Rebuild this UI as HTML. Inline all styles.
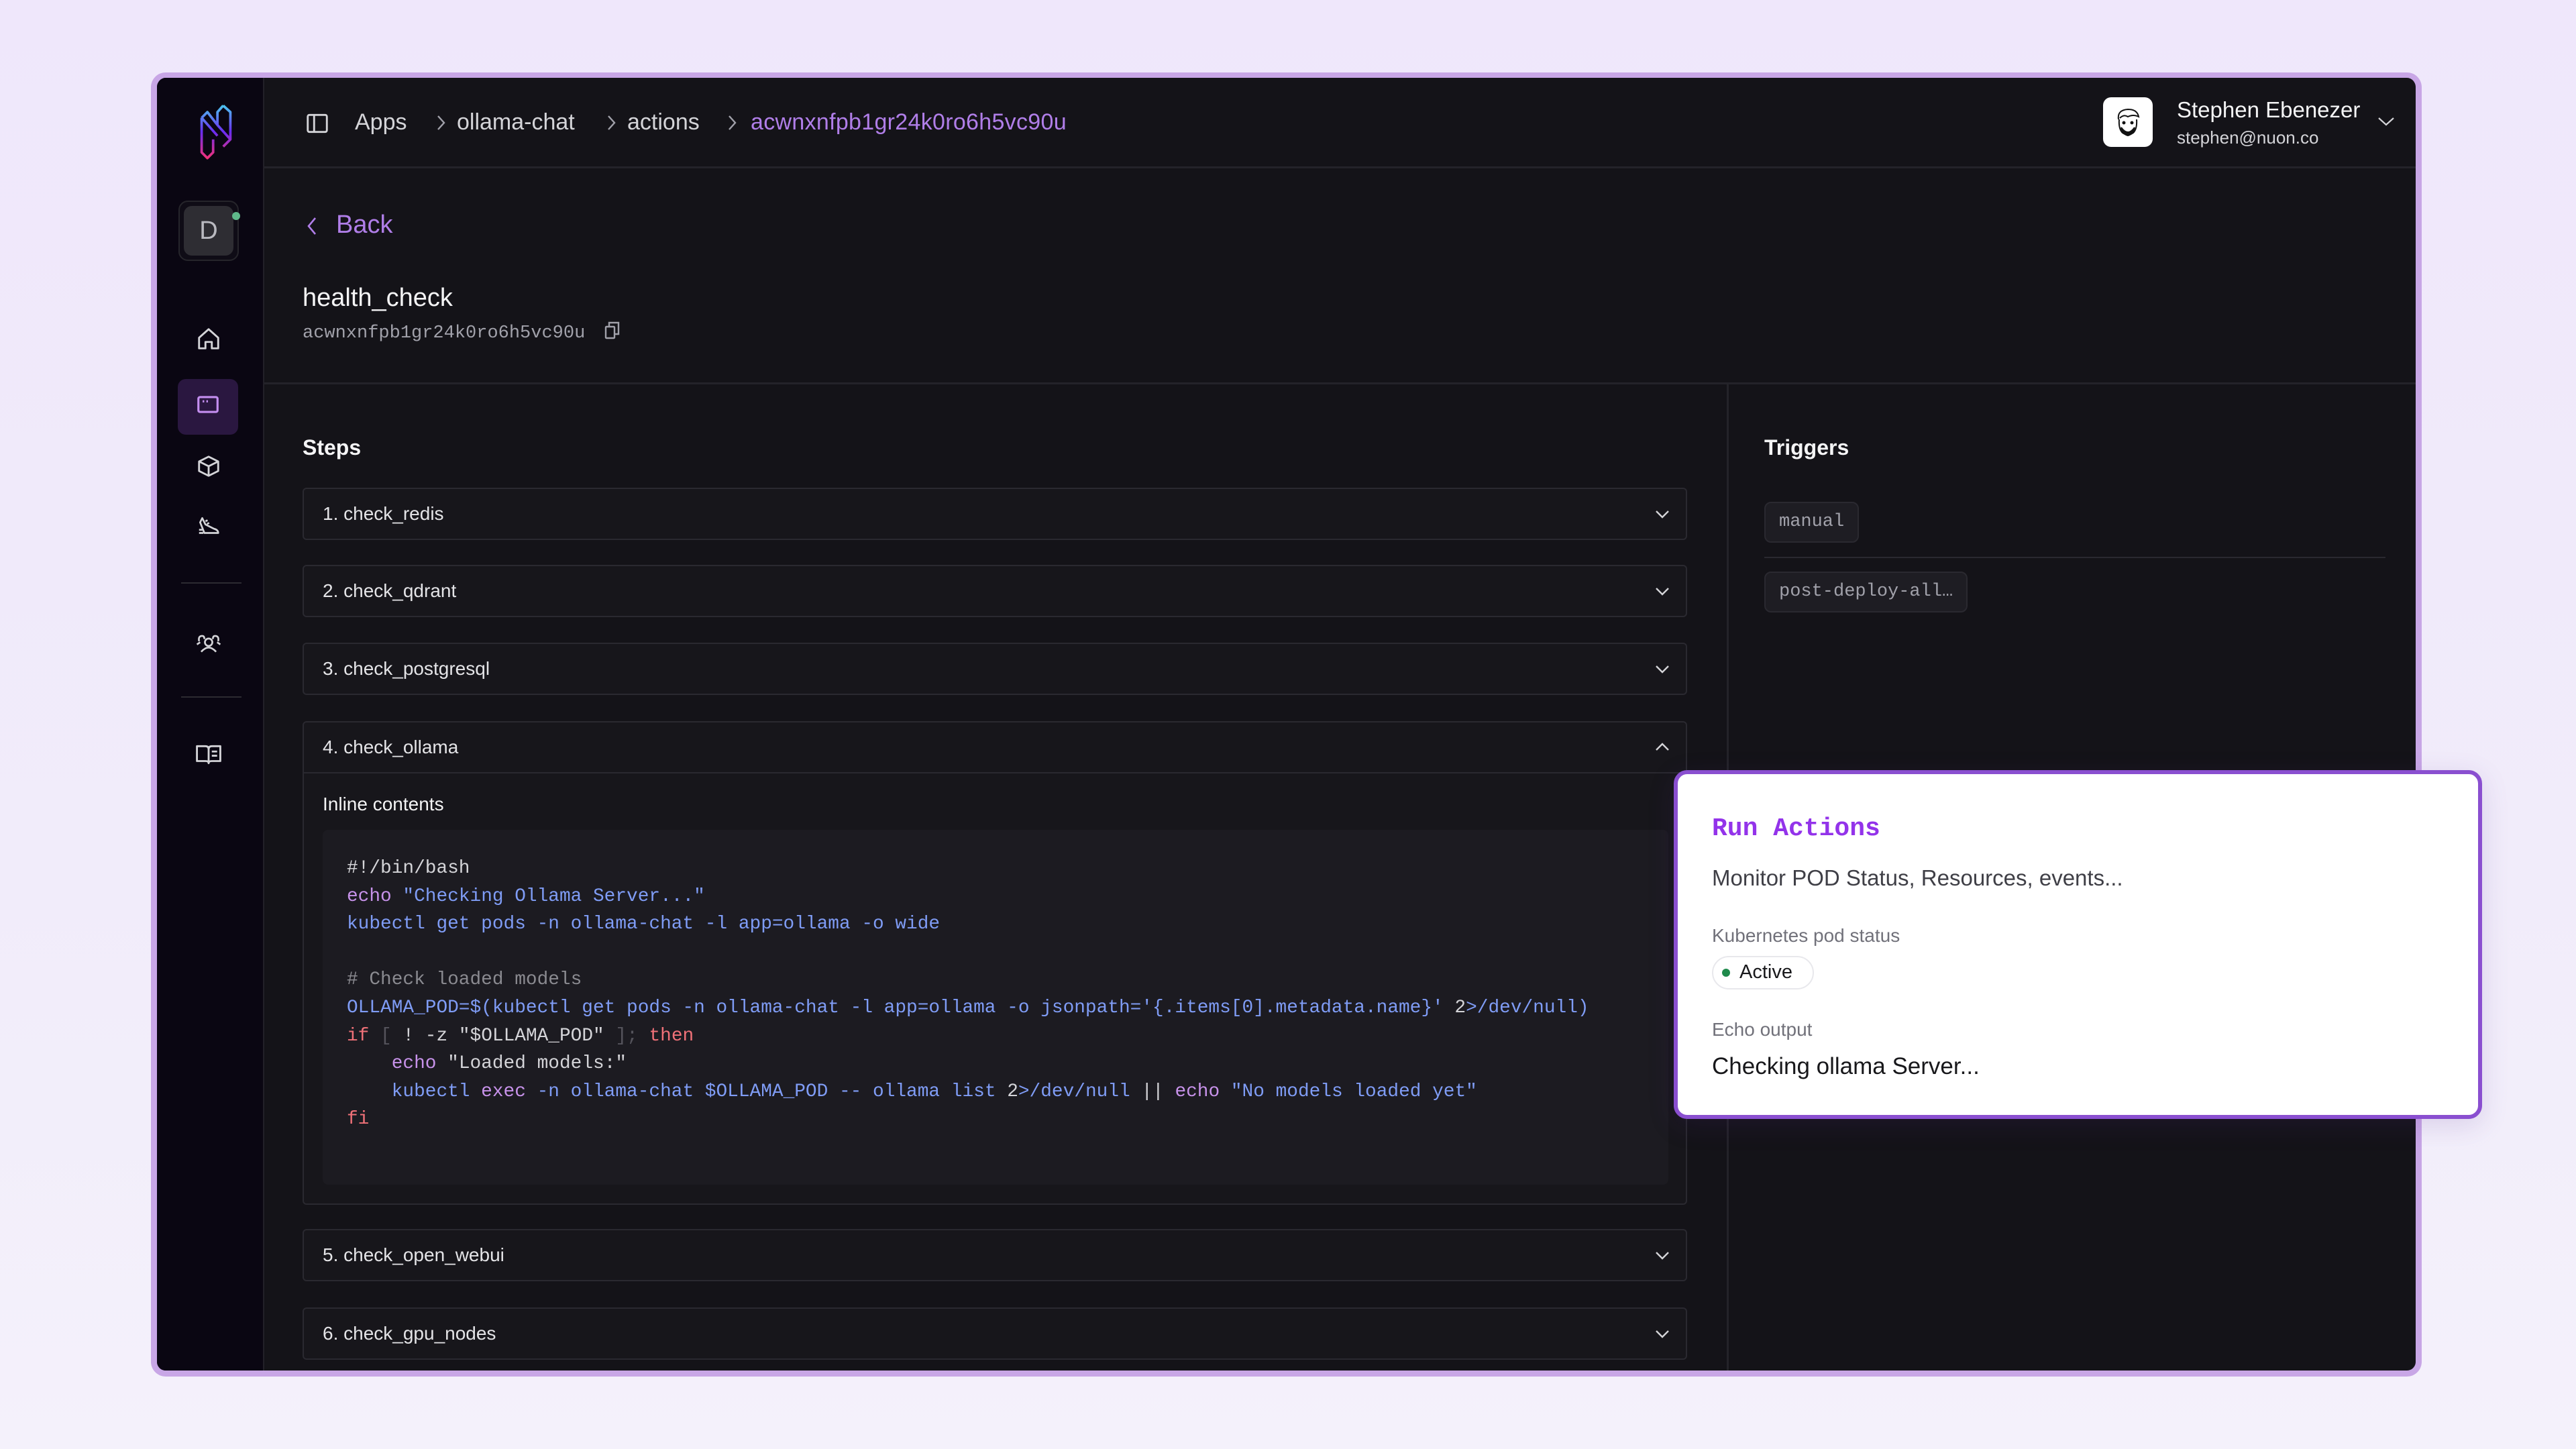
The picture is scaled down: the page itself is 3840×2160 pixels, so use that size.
<!DOCTYPE html>
<html><head><meta charset="utf-8"><style>
*{margin:0;padding:0;box-sizing:border-box}
body{width:3840px;height:2160px;overflow:hidden;background:linear-gradient(180deg,#efe7fb 0%,#f1ecfa 60%,#f4f1fb 100%);font-family:"Liberation Sans",sans-serif;position:relative}
.win{position:absolute;left:225px;top:108px;width:3385px;height:1944px;border:9px solid #c8a6e6;border-top-width:8px;border-radius:22px;background:#141318;overflow:hidden}
.side{position:absolute;left:0;top:0;width:160px;height:100%;background:#0a0612;border-right:2px solid #222028}
.abs{position:absolute}
.hdr{position:absolute;left:160px;top:0;right:0;height:135px;border-bottom:3px solid #242329}
.t{position:absolute;white-space:nowrap}
.mono{font-family:"Liberation Mono",monospace}
.acc{position:absolute;left:217px;width:2064px;height:78px;border:2px solid #2a2930;border-radius:6px;background:#17161b}
.acc>span{position:absolute;left:28px;top:21px;font-size:28px;color:#e4e4e7}
.acc>svg{position:absolute;right:22px;top:26px}
.code div{height:41.6px;line-height:41.6px;white-space:pre}
.k{color:#c792ea}.b{color:#7f9cf5}.c{color:#8a8a90}.r{color:#f07178}.g{color:#55545c}.w{color:#d4d4d8}
.chip{position:absolute;background:#1e1d23;border:2px solid #2a2930;border-radius:10px;font-family:"Liberation Mono",monospace;font-size:27px;color:#a1a1aa;padding:0 20px;height:61px;line-height:57px}
</style></head><body>
<div class="win">
 <div class="side">
  <svg class="abs" style="left:58px;top:38px" width="60" height="84" viewBox="0 0 56 78"><defs><linearGradient id="lg" x1="0" y1="0" x2="0" y2="1"><stop offset="0" stop-color="#4cc4f0"/><stop offset=".5" stop-color="#6a2cf0"/><stop offset="1" stop-color="#f0307a"/></linearGradient></defs><path d="M38 3 L48 12 L48 50 L38 60 M38 3 L30 12 L30 30 M30 30 L48 50 M8 20 L30 45 M8 20 L8 68 L16 76 L24 68 L24 50 M8 20 L16 12 L30 30" fill="none" stroke="url(#lg)" stroke-width="3.5" stroke-linejoin="round"/></svg>
  <div class="abs" style="left:32px;top:183px;width:90px;height:90px;border:2px solid #26252b;border-radius:14px;background:#0f0c16"></div>
  <div class="abs" style="left:40px;top:191px;width:74px;height:74px;border-radius:12px;background:#2e2d33;color:#b9b9c0;font-size:38px;text-align:center;line-height:74px">D</div>
  <div class="abs" style="left:112px;top:200px;width:12px;height:12px;border-radius:50%;background:#5fb98a"></div>
  <svg class="abs" style="left:58px;top:370px" width="38" height="38" viewBox="0 0 24 24" fill="none" stroke="#d4d4d8" stroke-width="1.8" stroke-linejoin="round"><path d="M3 11 L12 3 L21 11 V21 H15 V15 H9 V21 H3 Z"/></svg>
  <div class="abs" style="left:31px;top:449px;width:90px;height:83px;border-radius:12px;background:#2a1740"></div>
  <svg class="abs" style="left:57px;top:468px" width="38" height="38" viewBox="0 0 24 24" fill="none" stroke="#c48ef0" stroke-width="2"><rect x="3" y="5" width="18" height="14" rx="1.5"/><path d="M7 9h1.5M10.5 9h1.5"/></svg>
  <svg class="abs" style="left:58px;top:560px" width="38" height="38" viewBox="0 0 24 24" fill="none" stroke="#d4d4d8" stroke-width="1.8" stroke-linejoin="round"><path d="M12 3 L21 7.5 V16.5 L12 21 L3 16.5 V7.5 Z M3 7.5 L12 12 L21 7.5 M12 12 V21"/></svg>
  <svg class="abs" style="left:57px;top:650px" width="40" height="38" viewBox="0 0 24 24" fill="none" stroke="#d4d4d8" stroke-width="1.7" stroke-linejoin="round"><path d="M6 4 L9 10 L17 14 Q21 15 21 18 H8 L4 8 Z M9 7 L11 6 M10.5 9.5 L12.5 8.5 M3 15h3M3 18h4"/></svg>
  <div class="abs" style="left:36px;top:752px;width:90px;height:2px;background:#2c2a31"></div>
  <svg class="abs" style="left:56px;top:824px" width="42" height="38" viewBox="0 0 26 24" fill="none" stroke="#d4d4d8" stroke-width="1.7"><circle cx="13" cy="11" r="3.5"/><path d="M6 20 Q13 12 20 20 M4 10 Q3 5 7 5 Q9 5 9 8 M22 10 Q23 5 19 5 Q17 5 17 8 M2 13 L5 11 M24 13 L21 11"/></svg>
  <div class="abs" style="left:36px;top:922px;width:90px;height:2px;background:#2c2a31"></div>
  <svg class="abs" style="left:56px;top:990px" width="42" height="38" viewBox="0 0 26 24" fill="none" stroke="#d4d4d8" stroke-width="1.8" stroke-linejoin="round"><path d="M2 4 H10 Q13 4 13 7 V20 Q13 18 10 18 H2 Z M24 4 H16 Q13 4 13 7 V20 Q13 18 16 18 H24 Z M16 9h5M16 13h5"/></svg>
 </div>
 <div class="hdr">
  <svg class="abs" style="left:60px;top:49px" width="38" height="38" viewBox="0 0 24 24" fill="none" stroke="#d4d4d8" stroke-width="1.8"><rect x="3" y="4" width="18" height="16" rx="1.5"/><path d="M9 4 V20"/></svg>
  <div class="t" style="left:135px;top:47px;font-size:34px;color:#d4d4d8">Apps</div>
  <svg class="abs" style="left:253px;top:52px" width="20" height="30" viewBox="0 0 20 30" fill="none" stroke="#a1a1aa" stroke-width="2.4"><path d="M6 5 L15 15 L6 25"/></svg>
  <div class="t" style="left:287px;top:47px;font-size:34px;color:#d4d4d8">ollama-chat</div>
  <svg class="abs" style="left:507px;top:52px" width="20" height="30" viewBox="0 0 20 30" fill="none" stroke="#a1a1aa" stroke-width="2.4"><path d="M6 5 L15 15 L6 25"/></svg>
  <div class="t" style="left:541px;top:47px;font-size:34px;color:#d4d4d8">actions</div>
  <svg class="abs" style="left:687px;top:52px" width="20" height="30" viewBox="0 0 20 30" fill="none" stroke="#a1a1aa" stroke-width="2.4"><path d="M6 5 L15 15 L6 25"/></svg>
  <div class="t" style="left:725px;top:47px;font-size:34px;color:#b07ee8;letter-spacing:0.3px">acwnxnfpb1gr24k0ro6h5vc90u</div>
  <div class="abs" style="left:2741px;top:29px;width:74px;height:74px;background:#fff;border-radius:12px"></div>
  <svg class="abs" style="left:2756px;top:42px" width="44" height="50" viewBox="0 0 44 50" fill="none" stroke="#111" stroke-width="2"><path d="M8 20 Q6 6 22 5 Q36 5 38 16 Q30 12 22 16 Q16 12 10 18"/><path d="M9 20 Q8 34 14 40 Q22 46 30 40 Q36 34 35 20"/><path d="M12 32 Q22 46 32 32 Q30 42 22 44 Q14 42 12 32Z" fill="#111"/><circle cx="16" cy="25" r="1.5" fill="#111"/><circle cx="28" cy="25" r="1.5" fill="#111"/></svg>
  <div class="t" style="left:2851px;top:29px;font-size:33px;color:#f4f4f5">Stephen Ebenezer</div>
  <div class="t" style="left:2851px;top:74px;font-size:26px;color:#d4d4d8">stephen@nuon.co</div>
  <svg class="abs" style="left:3148px;top:54px" width="30" height="22" viewBox="0 0 30 22" fill="none" stroke="#d4d4d8" stroke-width="2.2"><path d="M4 6 L15 16 L26 6"/></svg>
 </div>
 <svg class="abs" style="left:220px;top:204px" width="22" height="34" viewBox="0 0 22 34" fill="none" stroke="#b07ee8" stroke-width="2.6"><path d="M16 5 L6 17 L16 29"/></svg>
 <div class="t" style="left:267px;top:198px;font-size:38px;color:#b07ee8">Back</div>
 <div class="t" style="left:217px;top:307px;font-size:38px;color:#f4f4f5">health_check</div>
 <div class="t mono" style="left:217px;top:366px;font-size:27px;color:#a1a1aa">acwnxnfpb1gr24k0ro6h5vc90u</div>
 <svg class="abs" style="left:664px;top:360px" width="30" height="32" viewBox="0 0 30 32" fill="none" stroke="#a1a1aa" stroke-width="2.4"><rect x="5" y="11" width="13" height="17" rx="1"/><path d="M10 11 V5 H24 V22 H18"/></svg>
 <div class="abs" style="left:160px;top:454px;right:0;height:3px;background:#242329"></div>
 <div class="abs" style="left:2340px;top:457px;width:3px;bottom:0;background:#242329"></div>
 <div class="t" style="left:217px;top:533px;font-size:32px;font-weight:bold;color:#f4f4f5">Steps</div>
 <div class="acc" style="top:611px"><span>1. check_redis</span><svg width="26" height="22" viewBox="0 0 26 22" fill="none" stroke="#d4d4d8" stroke-width="2.4"><path d="M4 7 L13 16 L22 7"/></svg></div>
 <div class="acc" style="top:726px"><span>2. check_qdrant</span><svg width="26" height="22" viewBox="0 0 26 22" fill="none" stroke="#d4d4d8" stroke-width="2.4"><path d="M4 7 L13 16 L22 7"/></svg></div>
 <div class="acc" style="top:842px"><span>3. check_postgresql</span><svg width="26" height="22" viewBox="0 0 26 22" fill="none" stroke="#d4d4d8" stroke-width="2.4"><path d="M4 7 L13 16 L22 7"/></svg></div>
 <div class="acc" style="top:959px;height:721px"><span>4. check_ollama</span><svg width="26" height="22" viewBox="0 0 26 22" fill="none" stroke="#d4d4d8" stroke-width="2.4"><path d="M4 15 L13 6 L22 15"/></svg>
  <div class="abs" style="left:0;right:0;top:74px;height:2px;background:#2a2930"></div>
  <div class="t" style="left:28px;top:106px;font-size:28px;color:#f4f4f5">Inline contents</div>
  <div class="abs code mono" style="left:28px;top:160px;width:2006px;height:529px;background:#1c1b21;border-radius:8px;padding:37px 0 0 36px;font-size:27.8px">
   <div class="w">#!/bin/bash</div>
   <div><span class="k">echo</span> <span class="b">"Checking Ollama Server..."</span></div>
   <div class="b">kubectl get pods -n ollama-chat -l app=ollama -o wide</div>
   <div> </div>
   <div class="c"># Check loaded models</div>
   <div class="b">OLLAMA_POD=$(kubectl get pods -n ollama-chat -l app=ollama -o jsonpath='{.items[0].metadata.name}' <span class="w">2</span>&gt;/dev/null)</div>
   <div><span class="r">if</span> <span class="g">[</span> <span class="w">! -z</span> <span class="w">"$OLLAMA_POD"</span> <span class="g">];</span> <span class="r">then</span></div>
   <div>    <span class="k">echo</span> <span class="w">"Loaded models:"</span></div>
   <div class="b">    kubectl <span class="k">exec</span> -n ollama-chat $OLLAMA_POD -- ollama list <span class="w">2</span>&gt;/dev/null <span class="w">||</span> <span class="k">echo</span> "No models loaded yet"</div>
   <div class="r">fi</div>
  </div>
 </div>
 <div class="acc" style="top:1716px"><span>5. check_open_webui</span><svg width="26" height="22" viewBox="0 0 26 22" fill="none" stroke="#d4d4d8" stroke-width="2.4"><path d="M4 7 L13 16 L22 7"/></svg></div>
 <div class="acc" style="top:1833px"><span>6. check_gpu_nodes</span><svg width="26" height="22" viewBox="0 0 26 22" fill="none" stroke="#d4d4d8" stroke-width="2.4"><path d="M4 7 L13 16 L22 7"/></svg></div>
 <div class="t" style="left:2396px;top:533px;font-size:32px;font-weight:bold;color:#f4f4f5">Triggers</div>
 <div class="chip" style="left:2396px;top:632px">manual</div>
 <div class="abs" style="left:2396px;top:714px;width:926px;height:2px;background:#2a2930"></div>
 <div class="chip" style="left:2396px;top:736px">post-deploy-all…</div>
</div>
<div class="abs" style="left:2495px;top:1148px;width:1205px;height:520px;background:#fff;border:6px solid #8a4fd0;border-radius:20px;box-shadow:0 10px 40px rgba(80,40,140,.15)">
 <div class="t mono" style="left:51px;top:60px;font-size:38px;font-weight:bold;color:#9333ea">Run Actions</div>
 <div class="t" style="left:51px;top:136px;font-size:33px;color:#3f3f46">Monitor POD Status, Resources, events...</div>
 <div class="t" style="left:51px;top:225px;font-size:28px;color:#71717a">Kubernetes pod status</div>
 <div class="abs" style="left:51px;top:271px;width:152px;height:50px;border:2px solid #e8e8ec;border-radius:25px"></div>
 <div class="abs" style="left:66px;top:290px;width:12px;height:12px;border-radius:50%;background:#1f8a4c"></div>
 <div class="t" style="left:92px;top:279px;font-size:29px;color:#18181b">Active</div>
 <div class="t" style="left:51px;top:365px;font-size:28px;color:#71717a">Echo output</div>
 <div class="t" style="left:51px;top:416px;font-size:35px;color:#18181b">Checking ollama Server...</div>
</div>
</body></html>
